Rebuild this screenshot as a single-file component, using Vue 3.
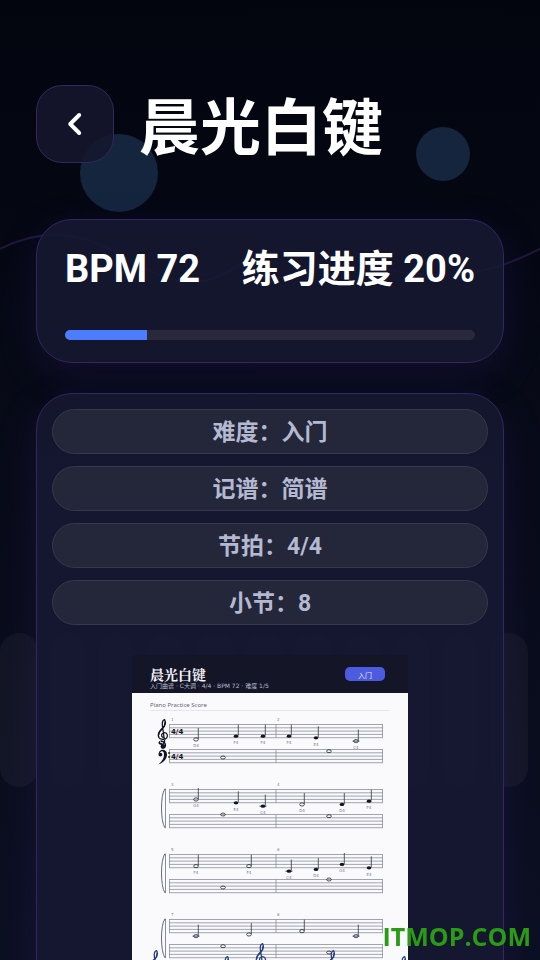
<script setup>
import { computed, ref } from 'vue'

const title = '晨光白键'
const bpm = 72
const progress = ref(20)
const facts = ['难度：入门', '记谱：简谱', '节拍：4/4', '小节：8']
const keyCount = 11

// Treble pitches as steps above the bottom line (E4).
const steps = { C4: -2, D4: -1, E4: 0, F4: 1, G4: 2 }

// Each note is [x, pitch, half?]; bass notes are [x, distance from top line].
const rows = [
  {
    top: 69, labels: true,
    notes: [[64, 'D4', 1], [104, 'F4'], [131, 'F4'], [157, 'F4'], [184, 'E4'], [224, 'C4', 1]],
    bass: [[91, 8], [197, 1.7]]
  },
  {
    top: 134, labels: true,
    notes: [[64, 'G4', 1], [104, 'E4'], [131, 'C4'], [170, 'D4', 1], [210, 'D4'], [237, 'F4']],
    bass: [[91, 0], [197, 1.7]]
  },
  {
    top: 199, labels: true,
    notes: [[64, 'F4', 1], [117, 'F4', 1], [157, 'C4'], [184, 'D4'], [210, 'G4'], [237, 'E4']],
    bass: [[91, 8], [197, 0]]
  },
  {
    top: 264, labels: false,
    notes: [[64, 'C4', 1], [117, 'D4', 1], [170, 'F4', 1], [224, 'C4', 1]],
    bass: [[91, 1.7], [197, 8]]
  }
]

const systems = computed(() => rows.map((row, i) => ({
  ...row,
  first: i * 2 + 1,
  notes: row.notes.map(([x, pitch, half]) => ({
    x, pitch, half, y: 13.3 - steps[pitch] * 1.67
  }))
})))

const smallClefs = [[23, 295], [94, 301], [129, 288], [200, 295], [271, 301]]

function goBack() {
  window.history.back()
}
</script>

<template>
  <div class="page">
    <div class="backdrop" aria-hidden="true">
      <span class="orb orb-left"></span>
      <span class="orb orb-right"></span>
      <svg class="wave" viewBox="0 0 540 60" preserveAspectRatio="none">
        <path d="M-4 21C20 8 44 4 62 5C112 8 148 52 190 52C232 52 240 20 292 20C344 20 370 45 440 45C482 45 510 34 544 17" />
      </svg>
      <div class="keys">
        <span v-for="n in keyCount" :key="n" class="key"></span>
      </div>
    </div>

    <main class="content">
      <header class="top">
        <button type="button" class="back" aria-label="返回" @click="goBack">
          <svg viewBox="0 0 24 24" width="36" height="36" aria-hidden="true">
            <path d="M14.8 6L8.8 12L14.8 18" />
          </svg>
        </button>
        <h1>{{ title }}</h1>
      </header>

      <section class="card practice">
        <div class="stats">
          <span>BPM {{ bpm }}</span>
          <span>练习进度 {{ progress }}%</span>
        </div>
        <div class="bar" role="progressbar" aria-label="练习进度" :aria-valuenow="progress">
          <div class="fill" :style="{ width: progress + '%' }"></div>
        </div>
      </section>

      <section class="card sheet">
        <ul class="facts">
          <li v-for="fact in facts" :key="fact">{{ fact }}</li>
        </ul>

        <svg class="score" viewBox="0 0 276 390" role="img" :aria-label="title">
          <defs>
            <g id="treble">
              <path class="clef-line" d="M3.4 24.4C1.2 25.6 .6 23.6 1.6 22.8" stroke-width="2" />
              <path class="clef-line" d="M1.6 23.8C3 26.6 7 25.2 6.5 21.6L4.3 5.8C3.9 2.2 5.6 .6 6.6 .6C8.2 3.8 7.2 7 4.4 9.8C2 12.1 .2 13.4 .3 16.4C.5 20.6 6.2 21.4 8.6 19C10.8 16.6 8.6 13.2 5.8 13.8C3.2 14.4 2.8 17.2 4.8 18.4" />
              <path class="clef-line" d="M7 3.4C7.2 6.4 5.4 8.4 3.8 9.8C1.6 12 .5 13.6 .6 16" stroke-width="1.8" />
            </g>
          </defs>

          <rect class="paper" width="276" height="390" />
          <rect class="score-head" width="276" height="38" />
          <text class="score-title" x="18" y="25">{{ title }}</text>
          <text class="score-sub" x="18" y="33">入门曲谱 · C大调 · 4/4 · BPM {{ bpm }} · 难度 1/5</text>
          <rect class="badge" x="213" y="12" width="40" height="14" rx="5" />
          <text class="badge-text" x="233" y="22.5">入门</text>
          <text class="score-note" x="18" y="52">Piano Practice Score</text>
          <path class="rule" d="M18 55.5H258" />

          <g v-for="(s, i) in systems" :key="s.first" :transform="`translate(0 ${s.top})`">
            <g class="staff">
              <path v-for="n in 5" :key="n" :d="`M37 ${(n - 1) * 3.3 + .5}H251M37 ${(n - 1) * 3.3 + 25.5}H251`" />
              <path d="M37.5 .5V13.7M144 .5V13.7M250.5 .5V13.7M37.5 25.5V38.7M144 25.5V38.7M250.5 25.5V38.7" />
            </g>
            <text class="measure" x="39" y="-3">{{ s.first }}</text>
            <text class="measure" x="145" y="-3">{{ s.first + 1 }}</text>

            <g v-if="i === 0">
              <use class="dark" href="#treble" x="26" y="-5" />
              <circle cx="31" cy="22.5" r="2.4" />
              <path class="clef-line dark" d="M29 17C33 18 34.4 20 33 23" />
              <circle cx="28.4" cy="30.6" r="1.9" />
              <path d="M26.6 30C27 24 35.6 24.6 35 31C34.6 36 30.6 38.8 26.2 40.6C30 37.4 32 34.8 32 30.6C32 27 29.4 26.2 27.8 29Z" />
              <circle cx="37" cy="29" r=".9" />
              <circle cx="37" cy="33" r=".9" />
              <text class="meter" x="39" y="10">4/4</text>
              <text class="meter" x="39" y="35">4/4</text>
            </g>
            <path v-else class="brace" d="M33.6 0H32.8C28.4 6 28.4 32 32.8 38.6H33.6" />
            <path v-if="i > 0" class="brace-bar" d="M33.5 0V38.6" />

            <g v-for="note in s.notes" :key="note.x">
              <path v-if="note.pitch === 'C4'" class="stem" :d="`M${note.x - 3.5} ${note.y + .5}h7`" />
              <ellipse :class="note.half ? 'open' : 'solid'" :cx="note.x" :cy="note.y + .5" rx="2.3" ry="1.6" />
              <path class="stem" :d="`M${note.x + 2.3} ${note.y}v-11`" />
              <text v-if="s.labels" class="pitch" :x="note.x" :y="note.y + 8.5">{{ note.pitch }}</text>
            </g>
            <ellipse v-for="b in s.bass" :key="b[0]" class="open" :cx="b[0]" :cy="b[1] + 25.5" rx="2.3" ry="1.5" />
          </g>

          <use v-for="c in smallClefs" :key="c[0]" class="blue" href="#treble" :x="c[0] - 5" :y="c[1]" />
        </svg>
      </section>
    </main>

    <div class="watermark">ITMOP.COM</div>
  </div>
</template>

<style>
body {
  margin: 0;
  background: #050712;
}
</style>

<style scoped>
.page {
  position: relative;
  box-sizing: border-box;
  height: 100vh;
  overflow: hidden auto;
  scrollbar-width: none;
  background: linear-gradient(#02040e, #070a16 40%, #0c1022);
  color: #fff;
  font-family: Roboto, "Noto Sans CJK SC", sans-serif;
}
.backdrop {
  position: absolute;
  inset: 0;
}
.orb {
  position: absolute;
  border-radius: 50%;
  background: #14253d;
}
.orb-left {
  top: 134px;
  left: 80px;
  width: 78px;
  height: 78px;
}
.orb-right {
  top: 127px;
  right: 70px;
  width: 54px;
  height: 54px;
}
.wave {
  position: absolute;
  top: 230px;
  left: 0;
  width: 100%;
  height: 60px;
}
.wave path {
  fill: none;
  stroke: #1e183b;
  stroke-width: 2;
}
.keys {
  position: absolute;
  top: 633px;
  left: 0;
  display: flex;
  gap: 11px;
}
.key {
  width: 38px;
  height: 154px;
  border-radius: 19px;
  background: #fff;
  opacity: 0.04;
}
.content {
  position: relative;
  padding: 85px 36px 16px;
}
.top {
  display: flex;
  align-items: flex-start;
  gap: 25px;
  margin-bottom: 46px;
}
.back {
  display: flex;
  align-items: center;
  justify-content: center;
  flex: none;
  width: 78px;
  height: 78px;
  padding: 0;
  border: 1px solid #33275f;
  border-radius: 26px;
  background: rgba(22, 23, 46, 0.86);
  cursor: pointer;
}
.back path {
  fill: none;
  stroke: #fff;
  stroke-width: 2.6;
  stroke-linecap: round;
  stroke-linejoin: round;
}
h1 {
  margin: 0;
  font-size: 61px;
  line-height: 88px;
  font-weight: 700;
}
.card {
  box-sizing: border-box;
  border: 1px solid #33275f;
  border-radius: 36px;
  background: rgba(23, 24, 50, 0.88);
  box-shadow: 0 12px 40px rgba(70, 40, 160, 0.18);
}
.practice {
  margin-bottom: 30px;
  padding: 21px 28px 22px;
}
.stats {
  display: flex;
  justify-content: space-between;
  margin-bottom: 33px;
  font-size: 38px;
  line-height: 56px;
  font-weight: 700;
  white-space: nowrap;
}
.bar {
  height: 10px;
  overflow: hidden;
  border-radius: 5px;
  background: #29293b;
}
.fill {
  height: 100%;
  background: #4c7dff;
}
.sheet {
  padding: 15px;
}
.facts {
  display: flex;
  flex-direction: column;
  gap: 12px;
  margin: 0 0 30px;
  padding: 0;
  list-style: none;
}
.facts li {
  padding-top: 3px;
  border: 1px solid #36384b;
  border-radius: 23px;
  background: #242639;
  color: #b4b9d2;
  font-size: 23px;
  line-height: 40px;
  font-weight: 700;
  text-align: center;
}
.score {
  display: block;
  width: 276px;
  max-width: 100%;
  margin: 0 auto;
  fill: #111424;
}
.paper { fill: #fafafc; }
.score-head { fill: #141628; }
.score-title {
  fill: #f4f4f8;
  font: 700 14px "Noto Serif CJK SC", "Noto Sans CJK SC", serif;
}
.score-sub {
  fill: #b9bdcf;
  font: 6px "DejaVu Sans", "Noto Sans CJK SC", sans-serif;
}
.badge { fill: #4d5bdf; }
.badge-text {
  fill: #e6e8ff;
  font: 7px "Noto Sans CJK SC", sans-serif;
  text-anchor: middle;
}
.score-note {
  fill: #62677a;
  font: 6px "Noto Sans", sans-serif;
}
.rule {
  stroke: #e6e7ec;
  stroke-width: 1;
}
.staff path {
  fill: none;
  stroke: #8b8d99;
  stroke-width: 0.8;
}
.measure {
  fill: #777b8c;
  font: 4px "DejaVu Sans", sans-serif;
}
.pitch {
  fill: #73778a;
  font: 4px "DejaVu Sans", sans-serif;
  text-anchor: middle;
}
.meter { font: 700 7px "DejaVu Sans", sans-serif; }
.stem {
  stroke: #303342;
  stroke-width: 0.8;
}
.open {
  fill: none;
  stroke: #232635;
  stroke-width: 0.8;
}
.brace {
  fill: none;
  stroke: #555866;
  stroke-width: 0.9;
}
.brace-bar {
  stroke: #6d707d;
  stroke-width: 0.8;
}
.clef-line {
  fill: none;
  stroke-width: 1.3;
  stroke-linecap: round;
}
.dark { stroke: #111424; }
.blue { stroke: #26407f; }
.watermark {
  position: fixed;
  right: 9px;
  bottom: 6px;
  color: #2a9b14;
  font: 700 25px/36px "Open Sans", "Noto Sans", sans-serif;
}
</style>
